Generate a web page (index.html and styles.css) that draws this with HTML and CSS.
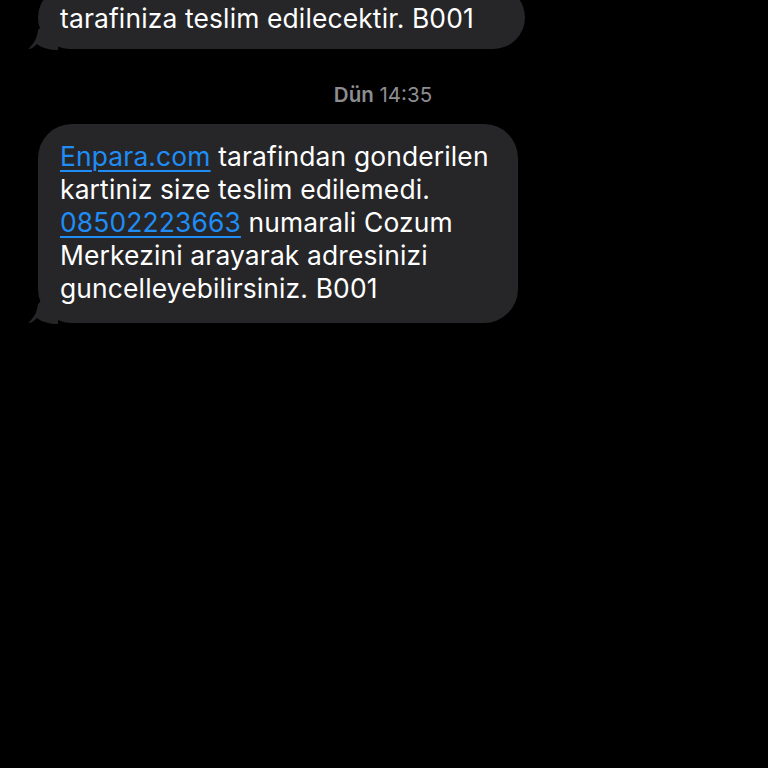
FILE: index.html
```html
<!DOCTYPE html>
<html>
<head>
<meta charset="utf-8">
<link rel="stylesheet" href="styles.css">
</head>
<body>
<div class="thread">
  <div class="bubble first">
    <p class="text">tarafiniza teslim edilecektir. B001</p>
    <svg class="tail" width="30" height="30" viewBox="0 0 30 30"><path d="M20 0 L30 0 L30 30 C22 30 14 28 9 24 C6 27 3 29 0 29 C5 25 9 19 10 10 Z" fill="#262628"/></svg>
  </div>
  <div class="stamp"><span class="day">Dün</span> 14:35</div>
  <div class="bubble second">
    <p class="text"><a class="link">Enpara.com</a> tarafindan gonderilen<br>kartiniz size teslim edilemedi.<br><a class="link">08502223663</a> numarali Cozum<br>Merkezini arayarak adresinizi<br>guncelleyebilirsiniz. B001</p>
    <svg class="tail" width="30" height="30" viewBox="0 0 30 30"><path d="M20 0 L30 0 L30 30 C22 30 14 28 9 24 C6 27 3 29 0 29 C5 25 9 19 10 10 Z" fill="#262628"/></svg>
  </div>
</div>
</body>
</html>
```
FILE: styles.css
```css
html, body {
  margin: 0;
  padding: 0;
  background: #000;
  width: 768px;
  height: 768px;
  overflow: hidden;
}
.thread {
  display: flex;
  flex-direction: column;
  align-items: flex-start;
  font-family: "Inter", "Liberation Sans", sans-serif;
}
.bubble {
  position: relative;
  background: #262628;
  border-radius: 34px;
  margin-left: 38px;
  padding: 16px 22px 18px 22px;
  box-sizing: border-box;
}
.bubble.first {
  margin-top: -14px;
  width: 487px;
  padding-bottom: 14px;
}
.bubble.second {
  width: 480px;
}
.text {
  margin: 0;
  color: #fff;
  font-size: 26.4px;
  line-height: 33px;
  letter-spacing: 0.15px;
  white-space: nowrap;
}
.link {
  color: #1f8df5;
  text-decoration: underline;
  text-decoration-thickness: 1.5px;
  text-underline-offset: 4px;
}
.tail {
  position: absolute;
  left: -10px;
  bottom: -1px;
}
.stamp {
  align-self: stretch;
  text-align: center;
  margin: 34px 0 17px 0;
  color: #8d8d92;
  font-size: 20.5px;
  line-height: 24px;
  width: 766px;
}
.day {
  font-weight: 600;
}
```
